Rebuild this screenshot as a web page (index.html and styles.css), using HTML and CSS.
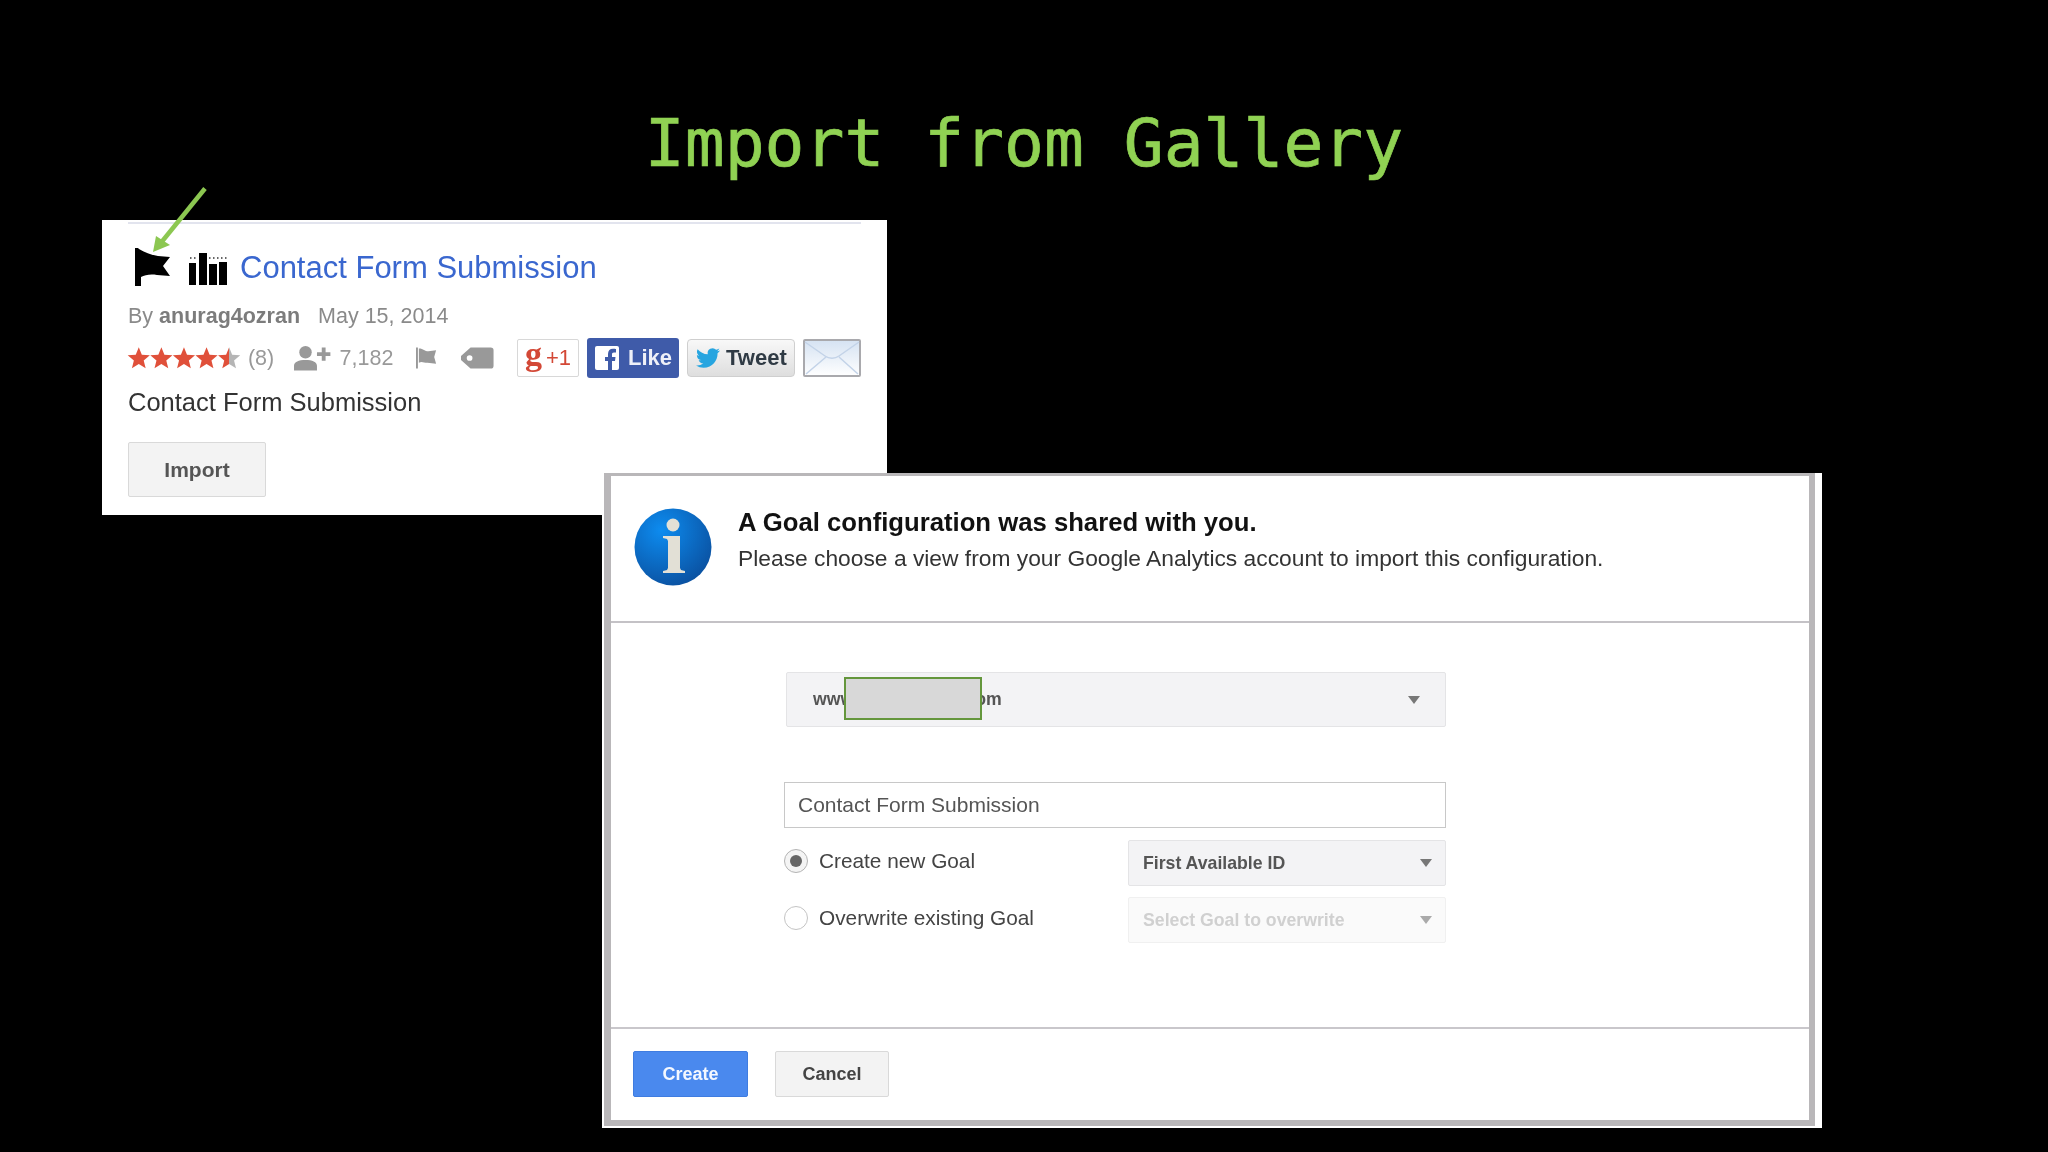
FILE: index.html
```html
<!DOCTYPE html>
<html lang="en">
<head>
<meta charset="utf-8">
<title>Import from Gallery</title>
<link rel="stylesheet" href="styles.css">
</head>
<body>
<svg class="defs" width="0" height="0" aria-hidden="true">
  <defs>
    <linearGradient id="half"><stop offset="50%" stop-color="#e0503a"/><stop offset="50%" stop-color="#b5b5b5"/></linearGradient>
    <radialGradient id="blue" cx="35%" cy="28%" r="80%"><stop offset="0" stop-color="#0d8cf0"/><stop offset="1" stop-color="#0a4f9e"/></radialGradient>
    <linearGradient id="mailg" x1="0" y1="0" x2="0" y2="1"><stop offset="0" stop-color="#d5e2f2"/><stop offset="1" stop-color="#ffffff"/></linearGradient>
    <path id="star" d="M12 1l3.100 7.600 8.200.6-6.300 5.300 2 8L12 18.200 5 22.500l2-8L.7 9.200l8.200-.6z"/>
  </defs>
</svg>
<main class="slide">
  <h1 class="title">Import from Gallery</h1>

  <section class="card">
    <div class="card-rule"></div>
    <div class="head-row">
      <svg class="ic-flag" viewBox="0 0 36 38"><path d="M0 0h3l1 1c5 3 12 6 19 7l12 1-7 9 7 10-13-1c-7-1-12 0-16 2v9H0z"/></svg>
      <svg class="ic-bars" viewBox="0 0 38 33"><path d="M0 11h7v22H0zM10 1h8v32h-8zM20 12h8v21h-8zM30 10h8v23h-8z"/><path opacity="0.6" d="M1 5h1.500v2H1zM5 5h1.500v2H5zM20 5h1.500v2H20zM24 5h1.500v2H24zM28 5h1.500v2H28zM32 5h1.500v2H32zM36 5h1.500v2H36z"/></svg>
      <a class="card-title">Contact Form Submission</a>
    </div>
    <div class="meta-row"><span>By <b>anurag4ozran</b></span><span>May 15, 2014</span></div>
    <div class="stats-row">
      <svg class="stars" viewBox="0 0 116 24">
        <use href="#star" fill="#e0503a"/><use href="#star" x="23" fill="#e0503a"/><use href="#star" x="46" fill="#e0503a"/><use href="#star" x="69" fill="#e0503a"/><use href="#star" x="92" fill="url(#half)"/>
      </svg>
      <span class="count">(8)</span>
      <svg class="ic-people" viewBox="0 0 38 26"><circle cx="12" cy="7" r="6.500"/><path d="M0 26v-5c0-4 5-6 12-6s12 2 12 6v5zM24 7h5V2h4v5h5v4h-5v5h-4v-5h-5z"/></svg>
      <span class="installs">7,182</span>
      <svg class="ic-miniflag" viewBox="0 0 22 22"><path d="M0 0h2v22H0zM3 1c5 0 6 3 10 3l8-1-2 7 2 7-9-1c-4 0-6-2-9 0z"/></svg>
      <svg class="ic-tag" viewBox="0 0 34 22"><path fill-rule="evenodd" d="M10 0h21a3 3 0 0 1 3 3v16a3 3 0 0 1-3 3H10L0 13V9zM9 8a3 3 0 1 0 0 6 3 3 0 0 0 0-6z"/></svg>
      <div class="share">
        <span class="btn-gplus"><span class="g">g</span><span class="plus">+1</span></span>
        <span class="btn-like"><svg class="ic-fb" viewBox="0 0 24 24"><rect width="24" height="24" rx="2" fill="#fff"/><path fill="#3f5ba9" d="M17 24v-9h3l.5-4H17V8.500c0-1.200.4-2 2-2h2V3c-.5 0-1.600-.2-3-.2-3 0-5 1.800-5 5.100V11h-3v4h3v9z"/></svg>Like</span>
        <span class="btn-tweet"><svg class="ic-tw" viewBox="0 0 24 24"><path d="M23.953 4.570a10 10 0 01-2.825.775 4.958 4.958 0 002.163-2.723c-.951.555-2.005.959-3.127 1.184a4.920 4.920 0 00-8.384 4.482C7.690 8.095 4.067 6.130 1.640 3.162a4.822 4.822 0 00-.666 2.475c0 1.710.870 3.213 2.188 4.096a4.904 4.904 0 01-2.228-.616v.060a4.923 4.923 0 003.946 4.827 4.996 4.996 0 01-2.212.085 4.936 4.936 0 004.604 3.417 9.867 9.867 0 01-6.102 2.105c-.390 0-.779-.023-1.170-.067a13.995 13.995 0 007.557 2.209c9.053 0 13.998-7.496 13.998-13.985 0-.210 0-.420-.015-.630A9.935 9.935 0 0024 4.590z"/></svg>Tweet</span>
        <svg class="ic-mail" viewBox="0 0 58 38"><rect x="1" y="1" width="56" height="36" rx="1" fill="url(#mailg)" stroke="#a9a9ad" stroke-width="2"/><path d="M2 3l20 14c4 3 10 3 14 0L56 3M3 35l20-17M55 35L36 18" fill="none" stroke="#c3d3e8" stroke-width="1.500"/></svg>
      </div>
    </div>
    <p class="desc">Contact Form Submission</p>
    <button class="btn btn-import">Import</button>
  </section>

  <svg class="arrow" viewBox="0 0 60 70"><path d="M55 1.500L10 57" stroke="#8cc751" stroke-width="4.500" fill="none"/><path d="M3 65l3-16 14 9z" fill="#8cc751"/></svg>

  <section class="dialog">
    <div class="frame">
      <header class="dlg-head">
        <svg class="ic-info" viewBox="0 0 78 78"><circle cx="39" cy="39" r="38.500" fill="url(#blue)"/><circle cx="39" cy="17" r="6.500" fill="#e2e0d6"/><path fill="#e2e0d6" d="M29 28h17v32l1 2 4 1v2H29v-2l4-1 1-2V33l-1-2-4-1z"/></svg>
        <div class="dlg-text">
          <h2>A Goal configuration was shared with you.</h2>
          <p>Please choose a view from your Google Analytics account to import this configuration.</p>
        </div>
      </header>
      <div class="dlg-body">
        <div class="select select-view">
          <span class="view-name">www<span class="view-gap"></span>om</span><i class="caret"></i>
          <div class="redact"></div>
        </div>
        <div class="input">Contact Form Submission</div>
        <div class="goal-grid">
          <label class="radio-row"><span class="radio on"></span>Create new Goal</label>
          <div class="select"><span>First Available ID</span><i class="caret"></i></div>
          <label class="radio-row"><span class="radio"></span>Overwrite existing Goal</label>
          <div class="select disabled"><span>Select Goal to overwrite</span><i class="caret"></i></div>
        </div>
      </div>
      <footer class="dlg-foot">
        <button class="btn btn-primary">Create</button>
        <button class="btn btn-cancel">Cancel</button>
      </footer>
    </div>
  </section>
</main>
</body>
</html>
```

FILE: styles.css
```css
* { box-sizing: border-box; }
html, body { margin: 0; padding: 0; background: #000; }
body { width: 2048px; height: 1152px; overflow: hidden; font-family: "Liberation Sans", Arial, sans-serif; }
.defs { position: absolute; }
.slide { position: relative; width: 2048px; height: 1152px; }
.title {
  margin: 0; padding-top: 99px; text-align: center;
  font: 400 66.300px/88px "DejaVu Sans Mono", monospace; color: #90d253;
  -webkit-text-stroke: 0.7px #90d253;
}

/* gallery card: a screenshot placed on the slide */
.card {
  position: absolute; left: 102px; top: 220px; width: 785px; height: 295px;
  background: #fff; padding: 0 26px; filter: blur(0.4px);
}
.card-rule { height: 2px; margin-top: 2px; background: #e2e4ee; }
.head-row { display: flex; align-items: center; height: 66px; margin-top: 11px; }
.ic-flag { width: 36px; height: 38px; margin-left: 7px; margin-top: -3px; }
.ic-bars { width: 38px; height: 33px; margin-left: 18px; }
.card-title { margin-left: 13px; font-size: 31px; color: #3a67cf; white-space: nowrap; }
.meta-row { display: flex; gap: 18px; height: 26px; margin-top: 2px; line-height: 26px; font-size: 21.500px; color: #8a8a8a; }
.meta-row b { color: #7c7c7c; }
.stats-row { display: flex; align-items: center; height: 40px; margin-top: 9px; font-size: 21.500px; color: #999; }
.stars { width: 119px; height: 24px; margin-left: -1px; }
.count { margin-left: 7px; }
.ic-people { width: 38px; height: 26px; margin-left: 20px; fill: #999; }
.installs { margin-left: 9px; }
.ic-miniflag { width: 22px; height: 22px; margin-left: 23px; fill: #999; }
.ic-tag { width: 34px; height: 22px; margin-left: 24px; fill: #999; }
.share { display: flex; align-items: center; gap: 8px; margin-left: 23px; }
.btn-gplus {
  display: flex; align-items: center; justify-content: center; width: 62px; height: 38px; gap: 4px;
  border: 1px solid #d8d8d8; border-radius: 2px; background: #fff; color: #d34836;
}
.btn-gplus .g { font: 700 34px/32px "Liberation Serif", serif; margin-top: -9px; }
.btn-gplus .plus { font-size: 22px; }
.btn-like {
  display: flex; align-items: center; gap: 9px; width: 92px; height: 40px; padding-left: 8px;
  border-radius: 3px; background: #3f5ba9; color: #eef0f8; font-size: 22px; font-weight: 700;
}
.ic-fb { width: 24px; height: 24px; }
.btn-tweet {
  display: flex; align-items: center; gap: 5px; width: 108px; height: 38px; padding-left: 7px;
  border: 1px solid #cfcfcf; border-radius: 4px; background: linear-gradient(#f8f8f8, #dedede);
  color: #2f3a44; font-size: 22px; font-weight: 700;
}
.ic-tw { width: 26px; height: 24px; fill: #27a5e0; }
.ic-mail { width: 58px; height: 38px; }
.desc { margin: 9px 0 0; font-size: 25.500px; line-height: 30px; color: #333; }
.btn {
  display: block; padding: 0; border-radius: 2px; font-family: inherit; font-weight: 700;
  border: 1px solid #d9d9d9; background: #f3f3f3; color: #555;
}
.btn-import { width: 138px; height: 55px; margin-top: 25px; font-size: 21px; }

.arrow { position: absolute; left: 150px; top: 187px; width: 60px; height: 70px; }

/* shared-goal dialog: a second screenshot overlapping the card */
.dialog {
  position: absolute; left: 602px; top: 473px; width: 1220px; height: 655px;
  background: #fff; padding: 0 7px 2px 2px; filter: blur(0.4px);
}
.frame {
  display: flex; flex-direction: column; height: 100%;
  border: solid #b9b7b9; border-width: 3px 6px 6px 7px; background: #fff;
}
.dlg-head {
  display: flex; height: 147px; flex: none; padding: 32px 0 0 23px;
  border-bottom: 2px solid #c4c2c6;
}
.ic-info { width: 78px; height: 78px; flex: none; }
.dlg-text { margin-left: 26px; margin-top: -1px; }
.dlg-text h2 { margin: 0; font-size: 25.700px; line-height: 30px; color: #111; }
.dlg-text p { margin: 6px 0 0; font-size: 22.800px; line-height: 30px; color: #333; }
.dlg-body { flex: 1; padding: 49px 0 0 173px; border-bottom: 2px solid #c9c7cb; }
.select {
  position: relative; display: flex; align-items: center; justify-content: space-between;
  height: 46px; padding: 0 13px 0 14px; border: 1px solid #e4e4e6; border-radius: 2px;
  background: #f3f3f5; font-size: 17.700px; font-weight: 700; color: #555;
}
.select-view { width: 660px; height: 55px; margin-left: 2px; padding: 0 25px 0 26px; }
.view-gap { display: inline-block; width: 121px; }
.redact {
  position: absolute; left: 57px; top: 4px; width: 138px; height: 43px;
  background: #d8d8d8; border: 2px solid #64963c;
}
.caret { width: 0; height: 0; border: 6px solid transparent; border-top: 8px solid #777; border-bottom: 0; }
.input {
  width: 662px; height: 46px; margin-top: 55px; padding-left: 13px; line-height: 44px;
  border: 1px solid #c8c8c8; background: #fff; font-size: 21px; color: #555;
}
.goal-grid { display: grid; grid-template-columns: 344px 318px; grid-auto-rows: 46px; row-gap: 11px; margin-top: 12px; }
.radio-row { display: flex; align-items: center; gap: 11px; margin-top: -5px; font-size: 20.800px; color: #444; }
.radio {
  display: flex; align-items: center; justify-content: center; width: 24px; height: 24px;
  border: 1px solid #c4c4c4; border-radius: 50%; background: #fff;
}
.radio.on { background: #f4f4f4; border-color: #b4b4b4; }
.radio.on::after { content: ""; width: 12px; height: 12px; border-radius: 50%; background: #666; }
.select.disabled { background: #fafafa; border-color: #f0f0f0; color: #d0d0d0; }
.select.disabled .caret { border-top-color: #aaa; }
.dlg-foot { display: flex; gap: 27px; padding: 22px 0 0 22px; flex: none; height: 91px; }
.btn-primary { width: 115px; height: 46px; background: #4a89ee; border-color: #3f7ce0; color: #f4f8ff; font-size: 18px; }
.btn-cancel { width: 114px; height: 46px; font-size: 18px; color: #444; }
```
